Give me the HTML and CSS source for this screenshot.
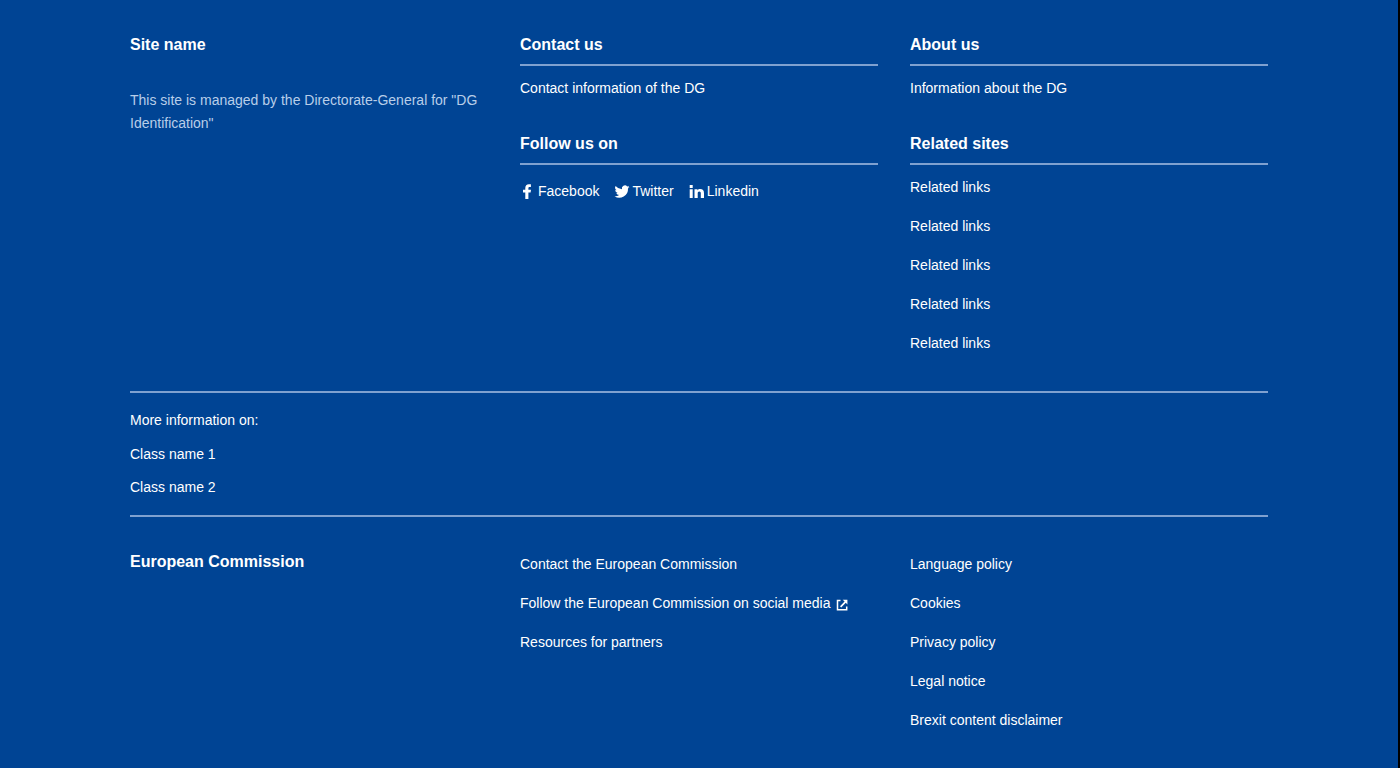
FILE: index.html
```html
<!DOCTYPE html>
<html lang="en">
<head>
<meta charset="utf-8">
<meta name="viewport" content="width=device-width, initial-scale=1">
<title>Site name</title>
<link rel="stylesheet" href="styles.css">
</head>
<body>
<footer class="footer">
  <div class="container">
    <div class="row row-site">
      <section>
        <h2 class="title">Site name</h2>
        <p class="description">This site is managed by the Directorate-General for "DG Identification"</p>
      </section>
      <div class="stack">
        <section>
          <h2 class="title title-ruled">Contact us</h2>
          <ul class="links"><li><a href="#">Contact information of the DG</a></li></ul>
        </section>
        <section>
          <h2 class="title title-ruled">Follow us on</h2>
          <ul class="social">
            <li><a href="#"><svg class="icon" viewBox="0 0 16 16" aria-hidden="true"><path d="M5.300 15V8.500H3V5.800h2.300V4.100C5.300 1.600 6.600.2 8.900.2h2v2.700H9.700C8.800 2.900 8.400 3.300 8.400 4.100v1.700H11l-.4 2.700H8.400V15z"/></svg>Facebook</a></li>
            <li><a href="#"><svg class="icon" viewBox="0 0 16 16" aria-hidden="true"><path d="M15.500 3a6 6 0 0 1-1.700.5 3 3 0 0 0 1.300-1.700 6 6 0 0 1-1.900.7 3 3 0 0 0-5.200 2.800A8.600 8.600 0 0 1 1.600 2.100a3 3 0 0 0 1 4.100 3 3 0 0 1-1.400-.4 3 3 0 0 0 2.400 3 3 3 0 0 1-1.300.1 3 3 0 0 0 2.800 2.100A6.200 6.200 0 0 1 .5 12.300 8.700 8.700 0 0 0 14 4.500z"/></svg>Twitter</a></li>
            <li><a href="#"><svg class="icon" viewBox="0 0 16 16" aria-hidden="true"><path d="M.7 5.300h3V14h-3zM.7 1h3v3h-3zM5.500 5.300h3v1.100c.6-.9 1.400-1.300 2.600-1.300 2.600 0 3.900 1.500 3.900 4.100V14h-3.200V9.500c0-1.200-.4-1.900-1.500-1.900s-1.600.7-1.600 1.900V14H5.500z"/></svg>Linkedin</a></li>
          </ul>
        </section>
      </div>
      <div class="stack">
        <section>
          <h2 class="title title-ruled">About us</h2>
          <ul class="links"><li><a href="#">Information about the DG</a></li></ul>
        </section>
        <section>
          <h2 class="title title-ruled">Related sites</h2>
          <ul class="links">
            <li><a href="#">Related links</a></li>
            <li><a href="#">Related links</a></li>
            <li><a href="#">Related links</a></li>
            <li><a href="#">Related links</a></li>
            <li><a href="#">Related links</a></li>
          </ul>
        </section>
      </div>
    </div>
    <section class="more">
      <p>More information on:</p>
      <ul class="classes">
        <li><a href="#">Class name 1</a></li>
        <li><a href="#">Class name 2</a></li>
      </ul>
    </section>
    <div class="row row-core">
      <h2 class="title">European Commission</h2>
      <ul class="links">
        <li><a href="#">Contact the European Commission</a></li>
        <li><a href="#">Follow the European Commission on social media<svg class="external" viewBox="0 0 12 12" aria-hidden="true"><path class="external-box" d="M4.500 1.500H1.500v9.200h9.200V7.500"/><path class="external-arrow" d="M6.700.7h4.700v4.700L9.800 3.800 5.200 8.400 4 7.200l4.600-4.600z"/></svg></a></li>
        <li><a href="#">Resources for partners</a></li>
      </ul>
      <ul class="links">
        <li><a href="#">Language policy</a></li>
        <li><a href="#">Cookies</a></li>
        <li><a href="#">Privacy policy</a></li>
        <li><a href="#">Legal notice</a></li>
        <li><a href="#">Brexit content disclaimer</a></li>
      </ul>
    </div>
  </div>
</footer>
</body>
</html>
```
FILE: styles.css
```css
* { box-sizing: border-box; margin: 0; padding: 0; }
body {
  background: #004494;
  color: #fff;
  font: 14px/23px "Liberation Sans", Arial, sans-serif;
}
ul { list-style: none; }
a { color: inherit; text-decoration: none; }
.footer { min-height: 100vh; border-right: 2px solid #000; }
.container { max-width: 1170px; margin: 0 auto; padding: 33px 16px 32px; }
.row { display: grid; grid-template-columns: repeat(3, minmax(0, 1fr)); column-gap: 32px; }
.title { font-size: 16px; line-height: 24px; }
.title-ruled { padding-bottom: 7px; border-bottom: 2px solid #7fa1d0; margin-bottom: 11px; }
.description { margin-top: 32px; color: #b8cee9; }
.stack { display: grid; gap: 32px; align-content: start; }
.links { display: grid; gap: 16px; align-content: start; }
.social { display: flex; flex-wrap: wrap; gap: 15px; padding-top: 4px; }
.social a { display: flex; align-items: center; gap: 2px; }
.icon { width: 16px; height: 16px; fill: currentColor; }
.more { margin: 36px 0 33px; padding: 16px 0; border: solid #7fa1d0; border-width: 2px 0; }
.classes { display: grid; gap: 10px; margin-top: 11px; }
.row-core .links { padding-top: 3px; }
.external { width: 12px; height: 12px; margin-left: 6px; vertical-align: -3px; }
.external-box { fill: none; stroke: currentColor; stroke-width: 1.5; }
.external-arrow { fill: currentColor; }
```
